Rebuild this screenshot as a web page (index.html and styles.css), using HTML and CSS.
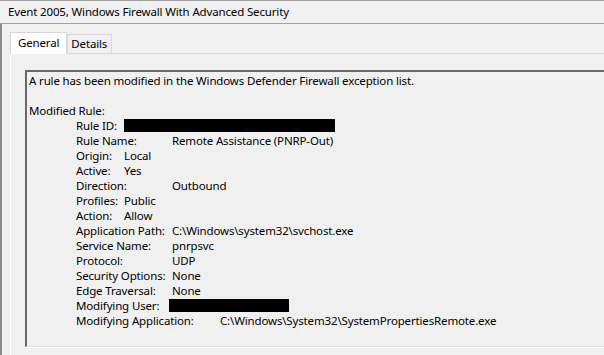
FILE: index.html
```html
<!DOCTYPE html>
<html lang="en">
<head>
    <meta charset="UTF-8">
    <title>Event 2005</title>
    <link rel="stylesheet" href="styles.css">
</head>
<body>

<div class="titlebar">Event 2005, Windows Firewall With Advanced Security</div>

<div class="dialog">
    <div class="tabs">
        <div class="tab active">General</div>
        <div class="tab">Details</div>
    </div>
    <div class="panel">
        <div class="textbox">
            <div class="line">A rule has been modified in the Windows Defender Firewall exception list.</div>
            <div class="line">&nbsp;</div>
            <div class="line">Modified Rule:</div>
            <div class="row"><span class="k1">Rule ID:</span><span class="redact id"></span></div>
            <div class="row"><span class="k2">Rule Name:</span>Remote Assistance (PNRP-Out)</div>
            <div class="row"><span class="k1">Origin:</span>Local</div>
            <div class="row"><span class="k1">Active:</span>Yes</div>
            <div class="row"><span class="k2">Direction:</span>Outbound</div>
            <div class="row"><span class="k1">Profiles:</span>Public</div>
            <div class="row"><span class="k1">Action:</span>Allow</div>
            <div class="row"><span class="k2">Application Path:</span>C:\Windows\system32\svchost.exe</div>
            <div class="row"><span class="k2">Service Name:</span>pnrpsvc</div>
            <div class="row"><span class="k2">Protocol:</span>UDP</div>
            <div class="row"><span class="k2">Security Options:</span>None</div>
            <div class="row"><span class="k2">Edge Traversal:</span>None</div>
            <div class="row"><span class="k2">Modifying User:</span><span class="redact user"></span></div>
            <div class="row"><span class="k3">Modifying Application:</span>C:\Windows\System32\SystemPropertiesRemote.exe</div>
        </div>
    </div>
</div>

</body>
</html>
```

FILE: styles.css
```css
/* Ventana de propiedades del evento */
body {
    margin: 0;
    width: 604px;
    height: 355px;
    overflow: hidden;
    background-color: #f0f0f0;
    font-family: "Noto Sans", "Open Sans", sans-serif;
    font-size: 11.5px;
    letter-spacing: -0.15px;
    color: #000;
}
.titlebar {
    height: 22px;
    line-height: 22px;
    padding-left: 8px;
    border-top: 1px solid #a0a0a0;
    border-bottom: 1px solid #a0a0a0;
}
.dialog {
    padding: 8px 0 0 8px;
    border-left: 2px solid #8c8c8c;
    height: 332px;
}
.tabs {
    display: flex;
    align-items: flex-end;
    height: 21px;
}
.tab {
    height: 18px;
    line-height: 18px;
    padding: 0 4px 0 3px;
    border: 1px solid #d9d9d9;
    border-bottom: none;
    background-color: #f0f0f0;
}
.tab.active {
    height: 21px;
    line-height: 20px;
    padding: 0 7px;
    margin-bottom: -1px;
    background-color: #fff;
    position: relative;
    z-index: 1;
}
.panel {
    border-top: 1px solid #d9d9d9;
    border-left: 1px solid #fff;
    padding: 16px 0 0 14px;
    height: 300px;
}
.textbox {
    height: 273px;
    border-top: 2px solid #696969;
    border-left: 2px solid #696969;
    border-bottom: 1px solid #e3e3e3;
    box-shadow: 0 1px 0 #fff;
    padding: 1px 0 0 2px;
    line-height: 15px;
    white-space: nowrap;
}
.row {
    padding-left: 47px;
}
.k1, .k2, .k3 {
    display: inline-block;
}
.k1 { width: 48px; }
.k2 { width: 96px; }
.k3 { width: 144px; }
.redact {
    display: inline-block;
    vertical-align: top;
    margin-top: 1px;
    height: 13px;
    background-color: #000;
}
.redact.id { width: 211px; }
.redact.user { width: 120px; margin-left: -3px; }
```
